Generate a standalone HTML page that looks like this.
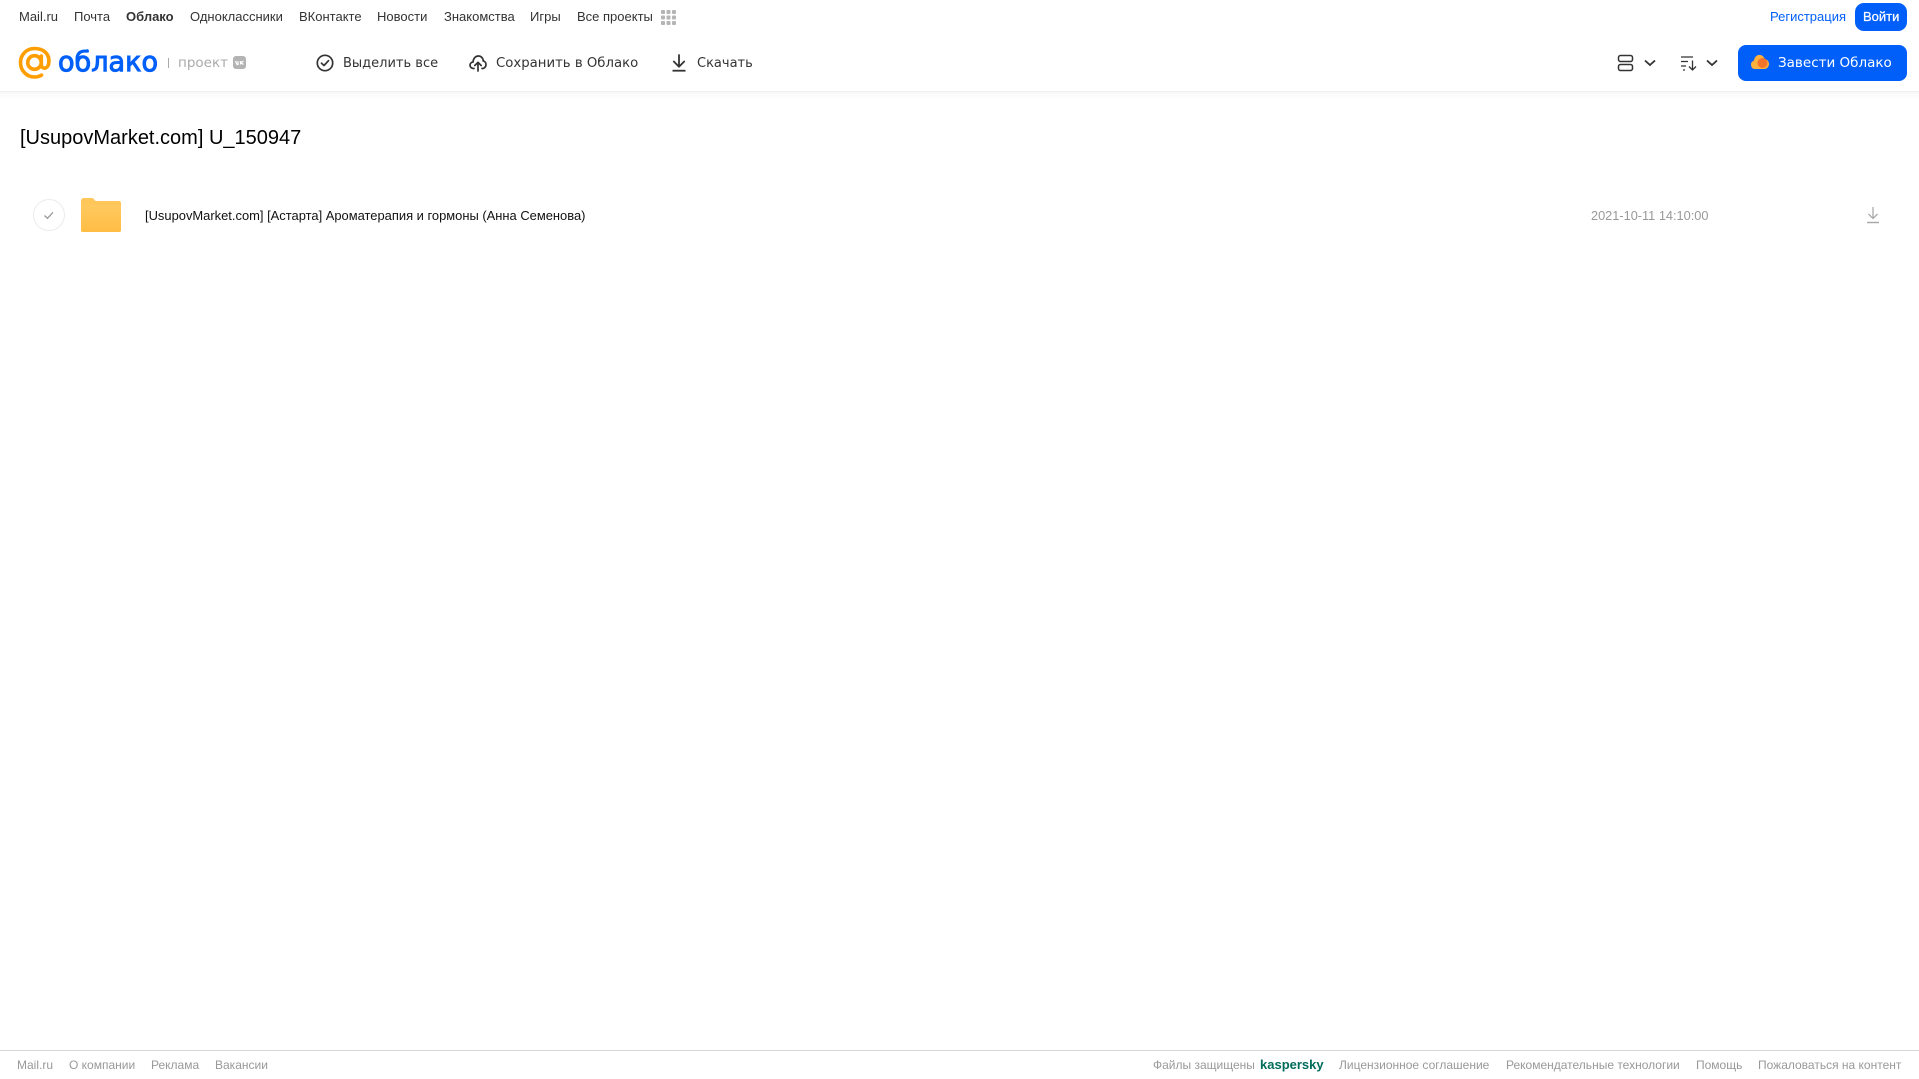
<!DOCTYPE html>
<html lang="ru"><head><meta charset="utf-8"><title>Облако</title>
<style>
html,body{margin:0;padding:0;background:#fff}
body{width:1919px;height:1079px;position:relative;overflow:hidden;font-family:"Liberation Sans",sans-serif}
.t{position:absolute;white-space:nowrap;line-height:20px}
.n{top:7px;font-size:13px;color:#333}
.a{top:54px;color:#333;font-family:"DejaVu Sans","Liberation Sans",sans-serif;font-size:13px}
.f{top:1055px;font-size:12px;color:#999}
svg{position:absolute;display:block}
</style></head><body>
<span class="t n" style="left:19px">Mail.ru</span>
<span class="t n" style="left:74px">Почта</span>
<span class="t n" style="left:126px;font-weight:bold">Облако</span>
<span class="t n" style="left:190px">Одноклассники</span>
<span class="t n" style="left:299px">ВКонтакте</span>
<span class="t n" style="left:377px">Новости</span>
<span class="t n" style="left:444px">Знакомства</span>
<span class="t n" style="left:530px">Игры</span>
<span class="t n" style="left:577px">Все проекты</span>
<svg style="left:661px;top:10px" width="15" height="15" fill="#b5b5b5"><rect x="0" y="0" width="4" height="4" rx="1"/><rect x="5.500" y="0" width="4" height="4" rx="1"/><rect x="11" y="0" width="4" height="4" rx="1"/><rect x="0" y="5.500" width="4" height="4" rx="1"/><rect x="5.500" y="5.500" width="4" height="4" rx="1"/><rect x="11" y="5.500" width="4" height="4" rx="1"/><rect x="0" y="11" width="4" height="4" rx="1"/><rect x="5.500" y="11" width="4" height="4" rx="1"/><rect x="11" y="11" width="4" height="4" rx="1"/></svg>
<span class="t n" style="left:1770px;color:#005ff9">Регистрация</span>
<div style="position:absolute;left:1855px;top:3px;width:52px;height:28px;background:#005ff9;border-radius:9px"></div>
<span class="t n" style="left:1863px;color:#fff;-webkit-text-stroke:.25px #fff">Войти</span>

<svg style="left:18px;top:46px" width="36" height="36" fill="none"><circle cx="16.500" cy="16.500" r="6.800" stroke="#ff9e00" stroke-width="3.600"/><path d="M23.300 10v8.500c0 5 6.200 5 7.300-.5C32.500 8 25.500 2.500 16.500 2.500 8.500 2.500 2.500 8.800 2.500 16.500 2.500 25 9 31 16.500 31c2.800 0 5-.6 7-1.800" stroke="#ff9e00" stroke-width="3.600" stroke-linecap="round"/></svg>
<svg style="left:56px;top:42px" width="106" height="40"><text x="2" y="29" font-family="DejaVu Sans,sans-serif" font-size="28" fill="#005ff9" stroke="#005ff9" stroke-width="1" textLength="100" lengthAdjust="spacingAndGlyphs">облако</text></svg>
<div style="position:absolute;left:168px;top:58px;width:1px;height:10px;background:#aaa"></div>
<span class="t" style="left:178px;top:53px;color:#aaa;font-family:'DejaVu Sans',sans-serif;font-size:13.500px">проект</span>
<div style="position:absolute;left:233px;top:56px;width:13px;height:13px;background:#b3b3b3;border-radius:3px"></div>
<svg style="left:233px;top:56px" width="13" height="13" fill="none" stroke="#fff" stroke-width="1.200"><path d="M2.500 5l1.500 3.500h1V5M10.500 5L8 6.800l2.500 1.700M7.500 5v3.500"/></svg>

<svg style="left:316px;top:54px" width="18" height="18" fill="none" stroke="#333" stroke-width="1.700"><circle cx="9" cy="9" r="7.700"/><path d="M5.500 9.200l2.500 2.300 4.500-4.800" stroke-linecap="round" stroke-linejoin="round"/></svg>
<span class="t a" style="left:343px">Выделить все</span>
<svg style="left:469px;top:54px" width="18" height="18" fill="none" stroke="#333" stroke-width="1.700"><path d="M5 14.500H4.500C2.500 14.500 1 13 1 11.300 1 9.500 2.300 8.200 4 8 4.300 4.500 6.500 2 9.300 2c2.700 0 4.800 2 5 5 1.600.3 2.700 1.800 2.700 3.500 0 2.200-1.500 4-3.500 4H13" stroke-linecap="round"/><path d="M9 17V8.500M5.800 11.500L9 8.300l3.200 3.200" stroke-linecap="round" stroke-linejoin="round"/></svg>
<span class="t a" style="left:496px;font-size:13.270px">Сохранить в Облако</span>
<svg style="left:671px;top:54px" width="16" height="18" fill="none" stroke="#333" stroke-width="1.800"><path d="M8 1v11.500M2.800 7.500L8 12.700l5.200-5.200" stroke-linecap="round" stroke-linejoin="round"/><path d="M1.500 16.700h13"/></svg>
<span class="t a" style="left:697px">Скачать</span>

<svg style="left:1617px;top:54px" width="17" height="18" fill="none" stroke="#333" stroke-width="1.500"><rect x="1.500" y="1.500" width="14" height="6" rx="2"/><rect x="1.500" y="10.500" width="14" height="6" rx="2"/></svg>
<svg style="left:1644px;top:59px" width="12" height="8" fill="none" stroke="#333" stroke-width="1.800"><path d="M1 1.500l5 4.500 5-4.500"/></svg>
<svg style="left:1681px;top:56px" width="17" height="15" fill="none" stroke="#333" stroke-width="1.300"><path d="M0 1h12M0 5.500h7M0 10h5M2 14h2M11.500 4.500v9M8 10.500l3.500 3.500 3.500-3.500"/></svg>
<svg style="left:1706px;top:59px" width="12" height="8" fill="none" stroke="#333" stroke-width="1.800"><path d="M1 1.500l5 4.500 5-4.500"/></svg>
<div style="position:absolute;left:1738px;top:45px;width:169px;height:36px;background:#005ff9;border-radius:8px"></div>
<svg style="left:1750px;top:53px" width="20" height="18"><path d="M1 11.500C1 9 3 8 4 7.500 4.500 3.500 7.500 1.500 10 2c2.500.2 4 2 4.500 4 3 .5 4.500 2.500 4.500 5 0 3-2.500 5-4.500 5h-10C2.500 16 1 14 1 11.500z" fill="#ffb13d"/><circle cx="12.500" cy="10" r="5" fill="#f4742b"/></svg>
<span class="t a" style="left:1778px;top:53px;color:#fff;font-size:13.500px">Завести Облако</span>

<div style="position:absolute;left:0;top:91px;width:1919px;height:1px;background:#f0f0f0"></div>
<div style="position:absolute;left:0;top:92px;width:1919px;height:8px;background:linear-gradient(#f7f7f7,#fff)"></div>

<span class="t" style="left:20px;top:126px;line-height:24px;font-size:20px;color:#000">[UsupovMarket.com] U_150947</span>

<svg style="left:32px;top:198px" width="34" height="34" fill="none"><circle cx="17" cy="17" r="15.500" stroke="#ececec" stroke-width="1"/><path d="M12.500 17.500l3 2.800 5.500-6" stroke="#999" stroke-width="1.300"/></svg>
<svg style="left:80px;top:197px" width="42" height="36"><defs><linearGradient id="g" x1="0" y1="0" x2="0" y2="1"><stop offset="0" stop-color="#ffc95f"/><stop offset="1" stop-color="#ffbd45"/></linearGradient></defs><path d="M1 4c0-1.700 1-3 3-3h7c2.500 0 3 1 4.500 3H39c1.500 0 2 1 2 2v27c0 1.500-1 2-2 2H3c-1.500 0-2-1-2-2z" fill="#ffc75a"/><rect x="1" y="8" width="40" height="27" rx="2" fill="url(#g)"/></svg>
<span class="t" style="left:145px;top:206px;font-size:12.930px;color:#111">[UsupovMarket.com] [Астарта] Ароматерапия и гормоны (Анна Семенова)</span>
<span class="t" style="left:1591px;top:206px;font-size:12.750px;color:#999">2021-10-11 14:10:00</span>
<svg style="left:1866px;top:206px" width="14" height="18" fill="none" stroke="#aaa" stroke-width="1.300"><path d="M7 1v11M2.500 8L7 12.500 11.500 8"/><path d="M1 16.500h12" stroke-width="1.500"/></svg>

<div style="position:absolute;left:0;top:1050px;width:1919px;height:1px;background:#d8d8d8"></div>
<span class="t f" style="left:17px">Mail.ru</span>
<span class="t f" style="left:69px">О компании</span>
<span class="t f" style="left:151px">Реклама</span>
<span class="t f" style="left:215px">Вакансии</span>
<span class="t f" style="left:1153px">Файлы защищены</span>
<span class="t f" style="left:1260px;font-weight:bold;color:#006d5c;font-size:13px">kaspersky</span>
<span class="t f" style="left:1339px">Лицензионное соглашение</span>
<span class="t f" style="left:1506px">Рекомендательные технологии</span>
<span class="t f" style="left:1696px">Помощь</span>
<span class="t f" style="left:1758px">Пожаловаться на контент</span>
</body></html>
